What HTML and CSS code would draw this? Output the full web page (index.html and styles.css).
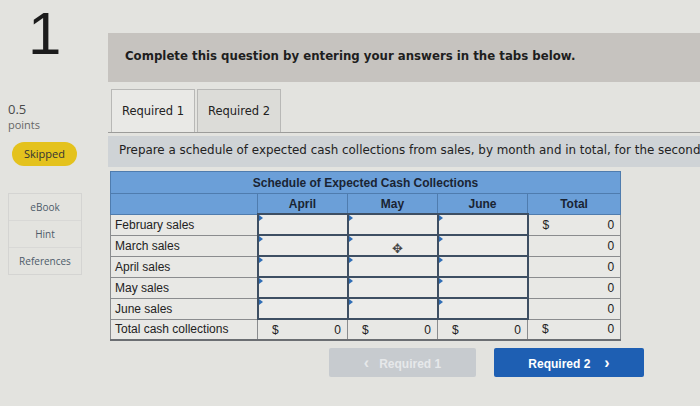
FILE: index.html
```html
<!DOCTYPE html>
<html>
<head>
<meta charset="utf-8">
<link rel="stylesheet" href="styles.css">
</head>
<body>
<div class="page">
  <aside class="side">
    <div class="qnum">1</div>
    <div class="pts">
      <div class="pts-val">0.5</div>
      <div class="pts-lbl">points</div>
    </div>
    <div class="skipped">Skipped</div>
    <div class="tools">
      <div class="tool">eBook</div>
      <div class="tool">Hint</div>
      <div class="tool">References</div>
    </div>
  </aside>
  <main class="main">
    <div class="banner">Complete this question by entering your answers in the tabs below.</div>
    <div class="tabs">
      <div class="tab active">Required 1</div>
      <div class="tab">Required 2</div>
    </div>
    <div class="prompt">Prepare a schedule of expected cash collections from sales, by month and in total, for the second</div>
    <table class="sched">
      <colgroup>
        <col class="c-lbl"><col class="c-m"><col class="c-m"><col class="c-m"><col class="c-t">
      </colgroup>
      <thead>
        <tr class="h1"><th colspan="5">Schedule of Expected Cash Collections</th></tr>
        <tr class="h2"><th></th><th>April</th><th>May</th><th>June</th><th>Total</th></tr>
      </thead>
      <tbody>
        <tr><td class="lbl">February sales</td><td class="in"></td><td class="in"></td><td class="in"></td><td class="tot"><span class="cur">$</span><span>0</span></td></tr>
        <tr><td class="lbl">March sales</td><td class="in"></td><td class="in"><span class="cursor">✥</span></td><td class="in"></td><td class="tot"><span></span><span>0</span></td></tr>
        <tr><td class="lbl">April sales</td><td class="in"></td><td class="in"></td><td class="in"></td><td class="tot"><span></span><span>0</span></td></tr>
        <tr><td class="lbl">May sales</td><td class="in"></td><td class="in"></td><td class="in"></td><td class="tot"><span></span><span>0</span></td></tr>
        <tr><td class="lbl">June sales</td><td class="in"></td><td class="in"></td><td class="in"></td><td class="tot"><span></span><span>0</span></td></tr>
        <tr class="sum"><td class="lbl">Total cash collections</td><td class="tot"><span class="cur">$</span><span>0</span></td><td class="tot"><span class="cur">$</span><span>0</span></td><td class="tot"><span class="cur">$</span><span>0</span></td><td class="tot"><span class="cur">$</span><span>0</span></td></tr>
      </tbody>
    </table>
    <div class="nav">
      <div class="btn prev"><span class="chev">‹</span>Required 1</div>
      <div class="btn next">Required 2<span class="chev">›</span></div>
    </div>
  </main>
</div>
</body>
</html>
```
FILE: styles.css
```css
html, body {
  margin: 0;
  padding: 0;
}
body {
  width: 700px;
  height: 406px;
  overflow: hidden;
  background: #e3e3df;
  font-family: "DejaVu Sans", Verdana, sans-serif;
  color: #222;
}
.page {
  display: grid;
  grid-template-columns: 108px 1fr;
  height: 406px;
}
.side {
  display: flex;
  flex-direction: column;
  align-items: flex-start;
}
.qnum {
  font-family: "Liberation Sans", Arial, sans-serif;
  font-size: 60px;
  line-height: 60px;
  color: #1c1c1c;
  margin: 4px 0 0 28px;
}
.pts {
  margin: 37px 0 0 8px;
  font-family: "Open Sans", sans-serif;
  color: #4a4a4a;
}
.pts-val {
  font-size: 13px;
  line-height: 16px;
}
.pts-lbl {
  font-size: 11px;
  line-height: 15px;
  color: #666;
}
.skipped {
  margin: 10px 0 0 12px;
  width: 65px;
  height: 24px;
  border-radius: 12px;
  background: #e4c21d;
  font-family: "Open Sans", sans-serif;
  font-size: 11px;
  line-height: 24px;
  text-align: center;
  color: #333;
}
.tools {
  margin: 27px 0 0 8px;
  width: 72px;
  border: 1px solid #d4d4d2;
}
.tool {
  height: 26px;
  line-height: 26px;
  text-align: center;
  font-family: "Open Sans", sans-serif;
  font-size: 10px;
  color: #4d5b6a;
  border-top: 1px solid #d8d8d6;
}
.tool:first-child {
  border-top: none;
}
.main {
  padding-top: 33px;
  min-width: 0;
}
.banner {
  height: 49px;
  line-height: 47px;
  background: #c6c3bf;
  padding-left: 17px;
  font-weight: bold;
  font-size: 11.75px;
  color: #1e1e1e;
  white-space: nowrap;
}
.tabs {
  display: flex;
  gap: 2px;
  margin-top: 7px;
  padding-left: 3px;
  border-bottom: 1px solid #9c9c9a;
}
.tab {
  width: 82px;
  height: 42px;
  line-height: 42px;
  text-align: center;
  font-size: 11.5px;
  color: #222;
  border: 1px solid #b8b8b6;
  border-bottom: none;
  background: #dcdcd8;
}
.tab.active {
  background: #e9e9e6;
}
.prompt {
  margin-top: 3px;
  height: 31px;
  line-height: 29px;
  background: #cfd3d6;
  padding-left: 11px;
  font-size: 11.9px;
  color: #222;
  white-space: nowrap;
  overflow: hidden;
}
.sched {
  margin: 4px 0 0 2px;
  border-collapse: collapse;
  table-layout: fixed;
  width: 511px;
  font-family: "Liberation Sans", Arial, sans-serif;
  font-size: 12px;
}
.c-lbl { width: 147px; }
.c-m { width: 90px; }
.c-t { width: 93px; }
.sched th {
  background: #6b9fd8;
  color: #1a2433;
  font-weight: bold;
  font-size: 12px;
  border: 1px solid #4f7cae;
  padding: 0;
}
.h1 th {
  height: 21px;
}
.h2 th {
  height: 19px;
}
.sched td {
  height: 19px;
  padding: 0;
  border: 1px solid #8a8c8e;
  background: #e8e8e5;
}
.sched td.lbl {
  padding-left: 4px;
  color: #222;
  white-space: nowrap;
}
.sched td.in {
  position: relative;
  border: 2px solid #3e4f63;
  background: #ececea;
}
.sched td.in::before {
  content: "";
  position: absolute;
  left: 0;
  top: 0;
  border-left: 4px solid #2f6db5;
  border-top: 3px solid transparent;
  border-bottom: 3px solid transparent;
}
.cursor {
  position: absolute;
  left: 43px;
  top: 6px;
  font-size: 13px;
  line-height: 13px;
  color: #444;
}
.sched td.tot {
  padding: 0 6px 0 14px;
  color: #222;
  text-align: right;
}
.tot span {
  display: inline-block;
}
.tot .cur {
  float: left;
}
.sched tr.sum td {
  border-bottom: 2px solid #6b6e72;
}
.nav {
  display: flex;
  gap: 18px;
  margin-top: 7px;
  padding-left: 221px;
}
.btn {
  height: 29px;
  line-height: 29px;
  text-align: center;
  font-family: "Liberation Sans", Arial, sans-serif;
  font-size: 12px;
  font-weight: bold;
  border-radius: 2px;
}
.btn.prev {
  width: 147px;
  background: #c7cbcf;
  color: #e6e8ea;
}
.btn.next {
  width: 150px;
  background: #1e5fb3;
  color: #fff;
}
.prev .chev {
  margin-right: 10px;
  font-size: 16px;
}
.next .chev {
  margin-left: 14px;
  font-size: 16px;
}
```
